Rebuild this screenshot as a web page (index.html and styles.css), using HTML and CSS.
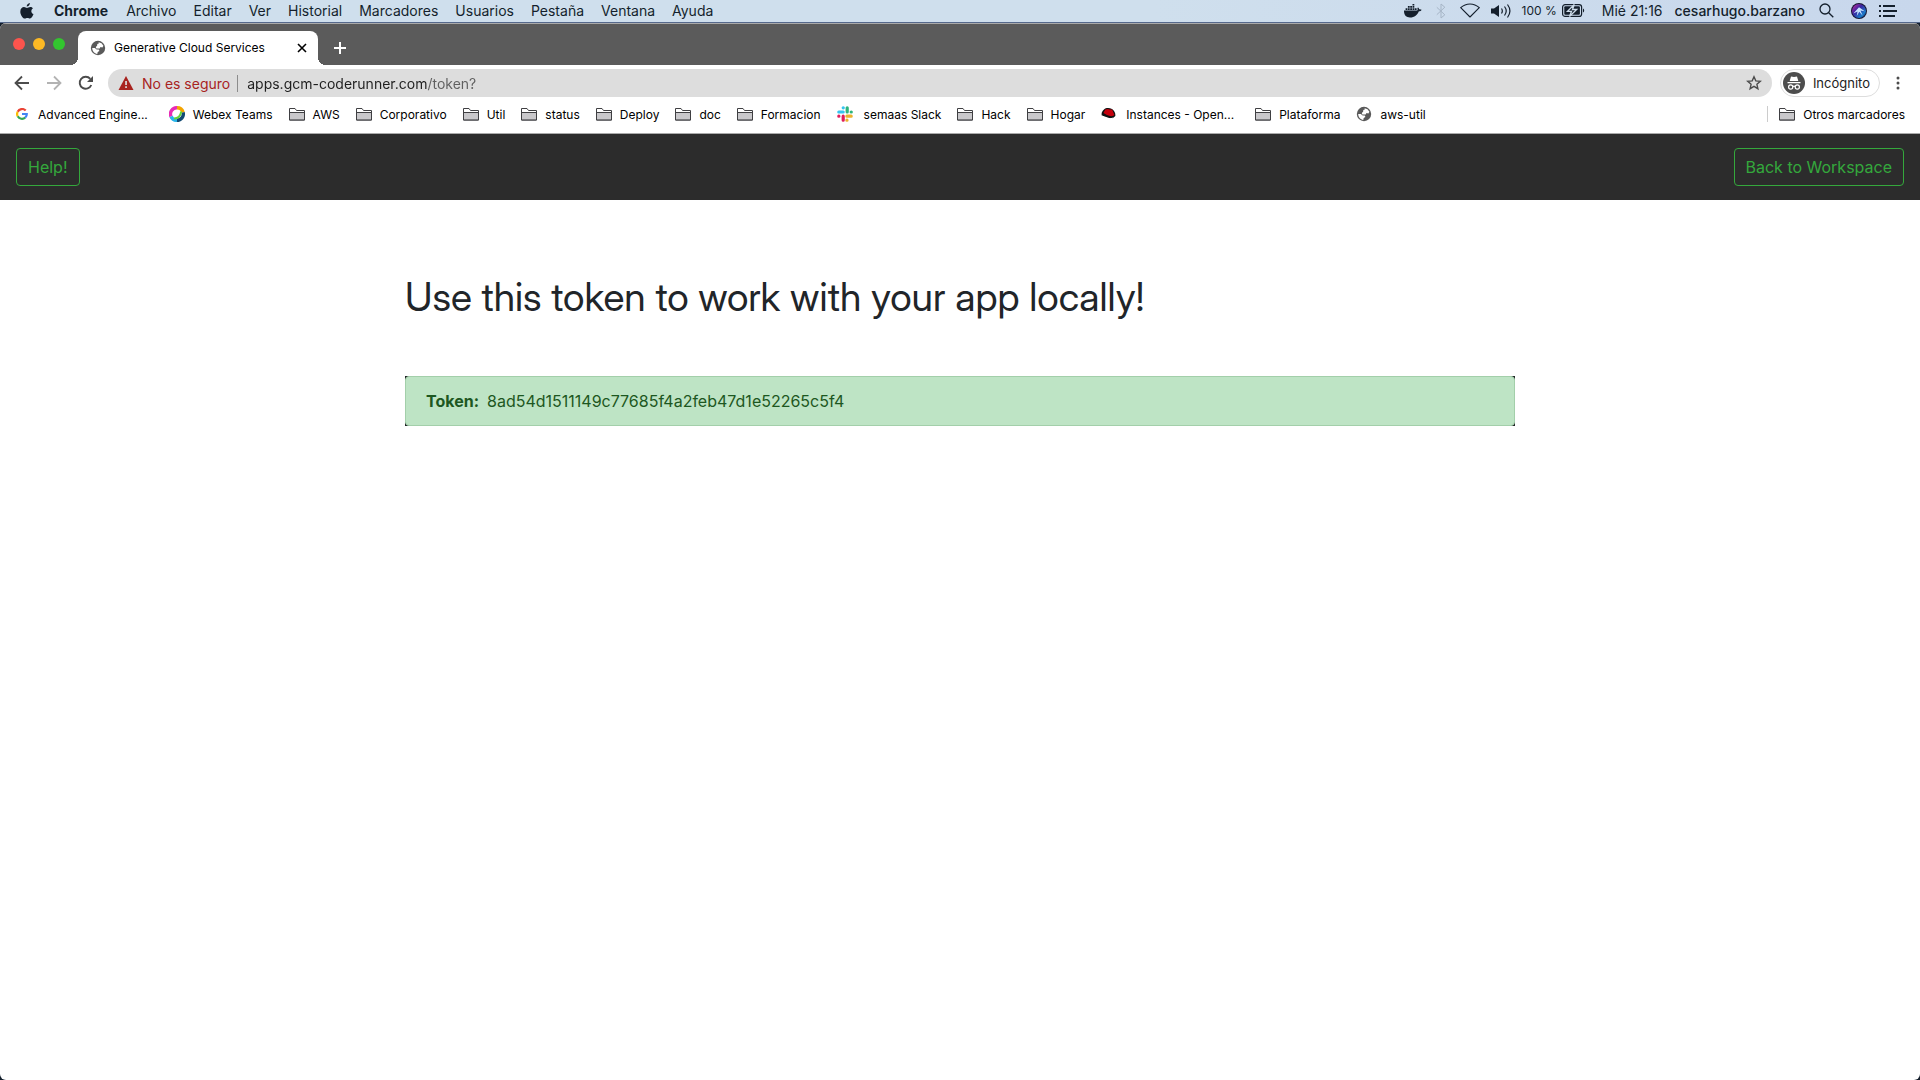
FILE: index.html
```html
<!DOCTYPE html>
<html lang="es">
<head>
<meta charset="utf-8">
<title>Generative Cloud Services</title>
<link rel="stylesheet" href="styles.css">
</head>
<body>
<svg class="defs" aria-hidden="true">
  <symbol id="folder" viewBox="0 0 16 14">
    <path d="M.5 13V1.500H6L7.500 3.500h8V13z" fill="#fff" stroke="#3f3f42"/>
    <path d="M1 5.500h14V12.500H1z" fill="#c9c8cb"/>
    <path d="M.5 5.500H15.500M.5 13h15" fill="none" stroke="#3f3f42"/>
  </symbol>
  <symbol id="globe" viewBox="0 0 16 16">
    <circle cx="8" cy="8" r="7.200" fill="#5a5a5a"/>
    <path d="M8.600 2.300 11.500 3.200 13.400 5.800l-1 1.600-1.900-.5-.8 1.700H6.300l-.5-1.500 1.300-1.300.2-1.700 1.500-.6z" fill="#fff"/>
    <path d="M2.200 8h2.600l1.900 1.400h2.100l.6 1.500-1.700 1-.4 2C4.500 13.500 2.300 11.200 2.200 8z" fill="#fff"/>
  </symbol>
</svg>

<header class="menubar">
  <svg class="apple" viewBox="0 0 14 16" width="14" height="16"><path fill="#141f2c" d="M9.900 0c.1 1.900-1.400 3.600-3.200 3.600C6.600 1.900 8.100.2 9.900 0zM12.900 5.400c-2.300 1.400-2 4.700.6 5.700-.7 2-2 4.400-3.500 4.400-1 0-1.400-.6-2.600-.6s-1.600.6-2.600.6C2.800 15.500.3 11.800.3 8.700c0-3 1.900-4.600 3.700-4.600 1.200 0 2.200.8 3 .8.700 0 1.900-.9 3.300-.9 1.100 0 2 .5 2.600 1.400z"/></svg>
  <nav class="menus">
    <b>Chrome</b><span>Archivo</span><span>Editar</span><span>Ver</span><span>Historial</span><span>Marcadores</span><span>Usuarios</span><span>Pestaña</span><span>Ventana</span><span>Ayuda</span>
  </nav>
  <div class="status">
    <svg width="18" height="14" viewBox="0 0 18 14" fill="#141f2c"><path d="M0 6.500h13c.6-.2.800-.7.500-1.500l-.1-1 .7-.5c.7.500 1 1.100 1 1.800.9-.2 1.800 0 2.500.4-.4 1-1.400 1.500-2.700 1.500C13.500 10.800 10.500 13.500 6 13.500 2 13.500-.2 11 0 6.500zM1.600 4.200h1.800V6H1.600zM3.900 4.200h1.800V6H3.900zM6.200 4.200H8V6H6.200zM8.500 4.200h1.800V6H8.500zM10.800 4.200h1.800V6h-1.800zM3.900 2h1.800v1.700H3.900zM6.200 2H8v1.700H6.200zM8.500 2h1.800v1.700H8.500zM8.500 0h1.800v1.500H8.500z"/></svg>
    <svg width="10" height="16" viewBox="0 0 10 16" fill="none" stroke="#a6b5c6"><path d="m.8 4.300 8 7.500L5 15V1l3.800 3.200-8 7.500"/></svg>
    <svg width="20" height="15" viewBox="0 0 20 15" fill="none" stroke="#141f2c" stroke-width="1.100" stroke-linejoin="round"><path d="M.7 4.700c5.400-5 13.200-5 18.600 0L10 14z"/></svg>
    <svg class="near" width="20" height="16" viewBox="0 0 20 16" fill="none" stroke="#141f2c" stroke-width="1.200"><path d="M0 5.500h3L8 2v12L3 10.500H0z" fill="#141f2c" stroke="none"/><path d="M10.500 5.500c1 1.500 1 3.500 0 5M13.500 3.500c2 2.600 2 6.400 0 9M16.500 1.500c3 4 3 9 0 13"/></svg>
    <span class="charge near"><span>100 %</span>
    <svg width="23" height="13" viewBox="0 0 23 13"><rect x=".6" y=".6" width="19" height="11.800" rx="2.500" fill="none" stroke="#141f2c" stroke-width="1.200"/><rect x="2.300" y="2.300" width="15.600" height="8.400" rx="1" fill="#141f2c"/><path d="M21 4.500c1.600.6 1.600 3.400 0 4z" fill="#141f2c"/><path d="M12.300.5 5.500 7.300h4L7.500 12.500l7.200-7h-4.200z" fill="#141f2c" stroke="#cddcea" stroke-width="1.300"/></svg></span>
    <span class="clock">Mié 21:16</span>
    <span class="user">cesarhugo.barzano</span>
    <svg width="15" height="15" viewBox="0 0 15 15" fill="none" stroke="#141f2c" stroke-width="1.300"><circle cx="6" cy="6" r="5"/><path d="m9.700 9.700 4.600 4.600"/></svg>
    <svg class="siri" width="16" height="16" viewBox="0 0 16 16"><defs><linearGradient id="sg" x1="0" y1="0" x2="1" y2="1"><stop offset="0" stop-color="#d02fa2"/><stop offset=".4" stop-color="#3a24a0"/><stop offset=".75" stop-color="#1b79c9"/><stop offset="1" stop-color="#131b48"/></linearGradient></defs><circle cx="8" cy="8" r="8" fill="#151432"/><circle cx="8" cy="8" r="7" fill="url(#sg)"/><path d="M2.300 10.500 8 4.200l5.700 4-4.200-.7 2.200 5.200-3.400-3.900-2.500 4.200.7-4.400z" fill="#c9e5ff"/></svg>
    <svg width="18" height="12" viewBox="0 0 18 12" fill="#141f2c"><path d="M0 0h2v2H0zM4 0h12v2H4zM0 5h2v2H0zM4 5h14v2H4zM0 10h2v2H0zM4 10h12v2H4z"/></svg>
  </div>
</header>

<div class="window">
  <div class="tabstrip">
    <div class="lights"><i class="red"></i><i class="amber"></i><i class="green"></i></div>
    <div class="tab">
      <svg width="16" height="16"><use href="#globe"/></svg>
      <span class="tab-title">Generative Cloud Services</span>
      <button class="icon" aria-label="Cerrar pestaña"><svg width="10" height="10" viewBox="0 0 10 10" stroke="#000" stroke-width="1.600"><path d="m1 1 8 8M9 1 1 9"/></svg></button>
    </div>
    <button class="icon" aria-label="Nueva pestaña"><svg width="12" height="12" viewBox="0 0 12 12" stroke="#fff" stroke-width="2"><path d="M6 0v12M0 6h12"/></svg></button>
  </div>

  <div class="toolbar">
    <div class="history">
      <button class="icon" aria-label="Atrás"><svg width="16" height="16" viewBox="0 0 16 16" fill="none" stroke="#4c4c4c" stroke-width="1.800"><path d="M15 8H2M8 1.500 1.500 8 8 14.500"/></svg></button>
      <button class="icon" aria-label="Adelante"><svg width="16" height="16" viewBox="0 0 16 16" fill="none" stroke="#b3b3b3" stroke-width="1.800"><path d="M1 8h13M8 1.500 14.500 8 8 14.500"/></svg></button>
      <button class="icon" aria-label="Recargar"><svg width="16" height="16" viewBox="0 0 16 16"><path d="M13.300 10A6 6 0 1 1 12.300 3.900" fill="none" stroke="#4c4c4c" stroke-width="1.900"/><path d="M15 1v6H9z" fill="#4c4c4c"/></svg></button>
    </div>
    <div class="omnibox">
      <svg width="16" height="14" viewBox="0 0 16 14"><path d="M8 0 15.500 14H.5z" fill="#a8231f"/><path d="M7.200 5h1.700v4H7.200zM7.200 10.200h1.700v1.700H7.200z" fill="#ddd"/></svg>
      <span class="insecure">No es seguro</span>
      <input class="url" type="text" aria-label="Dirección" value="apps.gcm-coderunner.com/token?">
      <button class="icon" aria-label="Añadir a marcadores"><svg width="16" height="16" viewBox="0 0 16 16" fill="none" stroke="#4c4c4c" stroke-width="1.400"><path d="m8 1.800 1.800 4.100 4.500.4-3.400 3 1 4.400L8 11.400l-3.900 2.300 1-4.400-3.400-3 4.500-.4z"/></svg></button>
    </div>
    <div class="incognito">
      <svg width="22" height="22" viewBox="0 0 22 22"><circle cx="11" cy="11" r="11" fill="#4d4d4d"/><path d="M8 4.500 11 5l3-.5 1.300 4.500H6.700zM4.500 10h13v1.200h-13z" fill="#fff"/><g fill="none" stroke="#fff" stroke-width="1.200"><circle cx="7.700" cy="15" r="2.100"/><circle cx="14.300" cy="15" r="2.100"/><path d="M9.800 14.600c.8-.5 1.600-.5 2.400 0"/></g></svg>
      <span>Incógnito</span>
    </div>
    <button class="icon more" aria-label="Menú"><svg width="4" height="14" viewBox="0 0 4 14" fill="#4c4c4c"><circle cx="2" cy="2" r="1.500"/><circle cx="2" cy="7" r="1.500"/><circle cx="2" cy="12" r="1.500"/></svg></button>
  </div>

  <nav class="bookmarks">
    <a href="#" class="wide"><svg width="12" height="12" viewBox="0 0 12 12" fill="none" stroke-width="2.200"><path d="M9.700 2.600A4.900 4.900 0 0 0 1.700 3.700" stroke="#ea4335"/><path d="M1.700 3.700a4.900 4.900 0 0 0 0 4.600" stroke="#fbbc05"/><path d="M1.700 8.300a4.900 4.900 0 0 0 7.500 1.300" stroke="#34a853"/><path d="M9.200 9.600A4.500 4.500 0 0 0 10.800 6H6" stroke="#4285f4"/></svg>Advanced Engine...</a>
    <a href="#"><svg width="16" height="16" viewBox="0 0 16 16" fill="none" stroke-width="3.400"><path d="M2 10.500A6.300 6.300 0 0 1 8 1.700" stroke="#e72bb6"/><path d="M8 1.700a6.300 6.300 0 0 1 6.100 4.700" stroke="#f4a400"/><path d="M14.100 6.400A6.300 6.300 0 0 1 8 14.300" stroke="#124a73"/><path d="M8 14.300a6.300 6.300 0 0 1-6-3.800" stroke="#27b4e8"/><path d="M5 12.500c3.500 0 6.500-2.500 7.300-7" stroke="#65d53a" stroke-width="2"/></svg>Webex Teams</a>
    <a href="#"><svg width="16" height="14"><use href="#folder"/></svg>AWS</a>
    <a href="#"><svg width="16" height="14"><use href="#folder"/></svg>Corporativo</a>
    <a href="#"><svg width="16" height="14"><use href="#folder"/></svg>Util</a>
    <a href="#"><svg width="16" height="14"><use href="#folder"/></svg>status</a>
    <a href="#"><svg width="16" height="14"><use href="#folder"/></svg>Deploy</a>
    <a href="#"><svg width="16" height="14"><use href="#folder"/></svg>doc</a>
    <a href="#"><svg width="16" height="14"><use href="#folder"/></svg>Formacion</a>
    <a href="#" class="site"><svg width="16" height="16" viewBox="0 0 16 16" stroke-width="3.200" stroke-linecap="round"><path d="M1.800 6h4.400M6.200 1.800h.1" stroke="#36c5f0"/><path d="M10.200 1.800V6M14.200 6h.1" stroke="#2eb67d"/><path d="M9.900 10.200h4.300M9.900 14.200h.1" stroke="#ecb22e"/><path d="M6.200 10.200v4M1.800 10.200h.1" stroke="#e01e5a"/></svg>semaas Slack</a>
    <a href="#"><svg width="16" height="14"><use href="#folder"/></svg>Hack</a>
    <a href="#"><svg width="16" height="14"><use href="#folder"/></svg>Hogar</a>
    <a href="#" class="wide"><svg width="15" height="12" viewBox="0 0 15 12"><path d="M3 1.500C5-.2 8-.3 11 1c2.500 1.500 3.700 4.500 3.300 7L11 11 .8 7.500C.2 5.500 1 3 3 1.500z" fill="#111"/><path d="M4.300 1.500 6.700.9l2 .7 2.400-.2 2.300 5.600c-1.300 1.700-5 1.300-7.400.1L2.400 5z" fill="#c4000c"/><path d="M1 7.200c3 2.700 7 3.900 11.500 2.200L11 12H4z" fill="#fff"/></svg>Instances - Open...</a>
    <a href="#"><svg width="16" height="14"><use href="#folder"/></svg>Plataforma</a>
    <a href="#"><svg width="16" height="16"><use href="#globe"/></svg>aws-util</a>
    <a href="#" class="other"><svg width="16" height="14"><use href="#folder"/></svg>Otros marcadores</a>
  </nav>

  <div class="navbar">
    <button class="btn">Help!</button>
    <button class="btn">Back to Workspace</button>
  </div>

  <main class="container">
    <h1>Use this token to work with your app locally!</h1>
    <div class="frame"><div class="alert"><strong>Token:</strong><span>8ad54d1511149c77685f4a2feb47d1e52265c5f4</span></div></div>
  </main>
</div>
</body>
</html>
```
FILE: styles.css
```css
* { box-sizing: border-box; }

body {
  margin: 0;
  min-height: 100vh;
  display: flex;
  flex-direction: column;
  background: #141f2c;
  font-family: Inter, "Liberation Sans", sans-serif;
  font-size: 12px;
  color: #000;
}

svg { display: block; flex: none; }
.defs { position: absolute; width: 0; height: 0; }

.icon {
  display: flex;
  padding: 0;
  border: 0;
  background: none;
}

.menubar {
  display: flex;
  align-items: center;
  height: 23px;
  padding: 0 23px 1px 20px;
  background: linear-gradient(90deg, #cfdfed, #cfdfed 60%, #c8d7ec);
  border-bottom: 1px solid #56698c;
  font-size: 14px;
  line-height: 16px;
  color: #141f2c;
}
.menus { display: flex; gap: 17px; margin-left: 20px; }
.menus b { margin-right: 1px; }
.status { display: flex; align-items: center; gap: 14px; margin-left: auto; white-space: nowrap; }
.near { margin-left: -3px; }
.charge { display: flex; align-items: center; gap: 5px; font-size: 12px; }
.clock { margin-left: 3px; }
.user { font-weight: 500; margin-left: -2px; }
.siri { margin: 0 -2px 0 3px; }

/* The window lets the desktop show at its rounded corners */
.window {
  flex: 1;
  overflow: hidden;
  border-radius: 6px;
  background: #fff;
}

.tabstrip {
  display: flex;
  align-items: center;
  height: 42px;
  padding: 7px 18px 0 13px;
  background: #5b5b5b;
  border-top: 1px solid #aaa;
}
.lights { display: flex; gap: 8px; margin: 0 13px 9px 0; }
.lights i { width: 12px; height: 12px; border-radius: 50%; }
.red { background: #fc544d; }
.amber { background: #fdb924; }
.green { background: #33c52f; }
.tab {
  position: relative;
  display: flex;
  align-items: center;
  gap: 8px;
  width: 240px;
  height: 100%;
  padding: 0 11px 1px 12px;
  margin-right: 16px;
  background: #fff;
  border-radius: 8px 8px 0 0;
}
/* Flared feet of the active tab */
.tab::before,
.tab::after {
  content: "";
  position: absolute;
  bottom: 0;
  width: 8px;
  height: 8px;
}
.tab::before { right: 100%; background: radial-gradient(circle at 0 0, transparent 8px, #fff 8px); }
.tab::after { left: 100%; background: radial-gradient(circle at 100% 0, transparent 8px, #fff 8px); }
.tab-title { flex: 1; white-space: nowrap; }

.toolbar {
  display: flex;
  align-items: center;
  height: 36px;
  padding: 0 20px 0 14px;
}
.history { display: flex; gap: 16px; margin-right: 14px; }
.omnibox {
  flex: 1;
  display: flex;
  align-items: center;
  height: 28px;
  padding: 0 10px;
  border-radius: 14px;
  background: #ddd;
  font-size: 14px;
}
.insecure {
  margin-left: 8px;
  padding-right: 7px;
  border-right: 1px solid #8c8c8c;
  color: #a8231f;
}
.url {
  flex: 1;
  padding: 0 0 0 9px;
  border: 0;
  font: inherit;
  color: transparent;
  background: linear-gradient(90deg, #1f1f1f 189px, #5f5f5f 189px) text;
}
.incognito {
  display: flex;
  align-items: center;
  gap: 8px;
  height: 28px;
  margin: 0 16px 0 8px;
  padding: 0 9px 0 2px;
  border: 1px solid #ddd;
  border-radius: 14px;
  font-size: 13px;
  color: #222;
}

.bookmarks {
  display: flex;
  align-items: center;
  gap: 16px;
  height: 33px;
  padding: 0 15px 6px 16px;
  border-bottom: 1px solid #aaa;
}
.bookmarks a {
  display: flex;
  align-items: center;
  gap: 8px;
  height: 16px;
  color: #000;
  text-decoration: none;
  white-space: nowrap;
}
.bookmarks .wide { padding-right: 5px; gap: 10px; }
.bookmarks .site { gap: 11px; }
.bookmarks .other { margin-left: auto; padding-left: 11px; border-left: 1px solid #ccc; }

.navbar {
  display: flex;
  justify-content: space-between;
  padding: 14px 16px;
  background: #2c2c2c;
}
.btn {
  height: 38px;
  padding: 0 11px;
  border: 1px solid #34a83c;
  border-radius: 4px;
  background: none;
  font: 16px Inter, "Liberation Sans", sans-serif;
  color: #34a83c;
}

.container {
  max-width: 1140px;
  margin: 0 auto;
  padding: 73px 15px 0;
}
h1 {
  margin: 0 0 55px;
  font-family: "Inter Display", Inter, sans-serif;
  font-size: 39px;
  font-weight: 400;
  line-height: 48px;
  color: #212529;
}
.frame { background: #1e2124; }
.alert {
  display: flex;
  gap: 8px;
  padding: 12px 20px;
  border: 1px solid #a3cfaa;
  border-radius: 4px;
  background: #bee4c5;
  font-size: 16px;
  line-height: 24px;
  color: #1d5721;
}
```
